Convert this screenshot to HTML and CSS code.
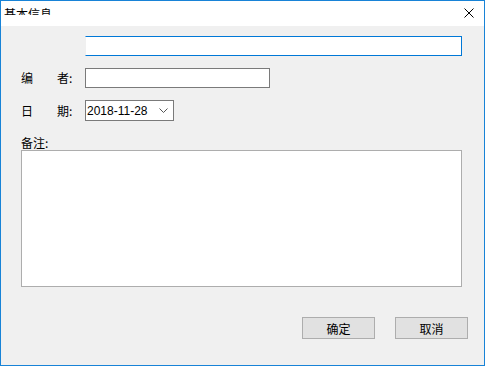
FILE: index.html
```html
<!DOCTYPE html>
<html lang="zh-CN">
<head>
    <meta charset="UTF-8">
    <title>基本信息</title>
    <link rel="stylesheet" href="styles.css">
</head>
<body>
    <div class="window">
        <div class="titlebar">
            <div class="title">基本信息</div>
            <svg class="close" width="10" height="10" viewBox="0 0 10 10">
                <path d="M0.5 0.5 L9.5 9.5 M9.5 0.5 L0.5 9.5" stroke="#000" stroke-width="1"/>
            </svg>
        </div>

        <div class="content">
            <div class="form-row">
                <span class="label"></span>
                <input type="text" class="field field-title">
            </div>
            <div class="form-row">
                <span class="label">编　　者:</span>
                <input type="text" class="field field-author">
            </div>
            <div class="form-row">
                <span class="label">日　　期:</span>
                <div class="date-box">
                    <span class="date-text">2018-11-28</span>
                    <svg width="9" height="5" viewBox="0 0 9 5">
                        <path d="M0.5 0.5 L4.5 4.5 L8.5 0.5" fill="none" stroke="#555" stroke-width="1"/>
                    </svg>
                </div>
            </div>

            <div class="note-label">备注:</div>
            <textarea class="note"></textarea>

            <div class="buttons">
                <button>确定</button>
                <button>取消</button>
            </div>
        </div>
    </div>
</body>
</html>
```

FILE: styles.css
```css
* {
    margin: 0;
    padding: 0;
    box-sizing: border-box;
    font-family: "Noto Sans CJK SC", "Liberation Sans", sans-serif;
}

body {
    background: #f0f0f0;
}

.window {
    width: 485px;
    height: 366px;
    border: 1px solid #1883d7;
    background: #f0f0f0;
    display: flex;
    flex-direction: column;
}

.titlebar {
    height: 25px;
    background: #fff;
    display: flex;
    justify-content: space-between;
    align-items: flex-start;
}

/* the caption is clipped in the original window */
.title {
    margin: 6px 0 0 3px;
    height: 8px;
    overflow: hidden;
    font-size: 12px;
    line-height: 13px;
    color: #000;
}

.close {
    margin: 7px 10px 0 0;
}

.content {
    flex: 1;
    padding: 10px 22px 0 20px;
    font-size: 12px;
    color: #000;
}

.form-row {
    display: flex;
    align-items: center;
    margin-bottom: 12px;
}

.label {
    width: 64px;
    line-height: 14px;
    white-space: pre;
}

.field {
    height: 20px;
    background: #fff;
    border: 1px solid #7a7a7a;
    outline: none;
}

.field-title {
    width: 377px;
    border-color: #0078d7;
    border-left-color: #f0f0f0;
}

.field-author {
    width: 185px;
}

.date-box {
    width: 89px;
    height: 21px;
    background: #fff;
    border: 1px solid #7a7a7a;
    display: flex;
    align-items: center;
    justify-content: space-between;
    padding: 0 5px 0 1px;
}

.date-text {
    font-family: "Liberation Sans", sans-serif;
    font-size: 12px;
}

.note-label {
    margin-top: 15px;
    height: 14px;
    line-height: 14px;
}

.note {
    display: block;
    width: 441px;
    height: 137px;
    background: #fff;
    border: 1px solid #adadad;
    resize: none;
    outline: none;
}

.buttons {
    display: flex;
    justify-content: flex-end;
    gap: 20px;
    margin-top: 30px;
    margin-right: -6px;
}

button {
    width: 73px;
    height: 22px;
    background: #e1e1e1;
    border: 1px solid #adadad;
    font-size: 12px;
    color: #000;
}
```
